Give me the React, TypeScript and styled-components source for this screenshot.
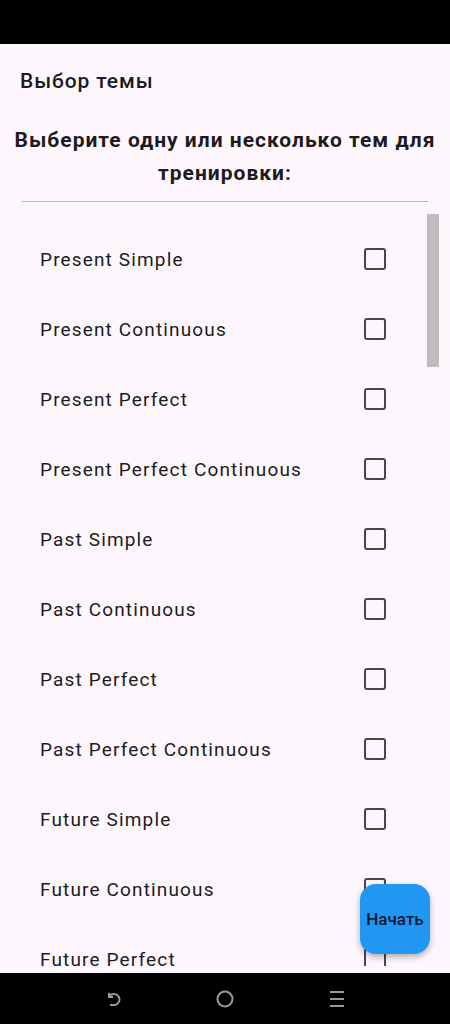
import React from "react";
import styled, { createGlobalStyle } from "styled-components";

const topics = [
  "Present Simple",
  "Present Continuous",
  "Present Perfect",
  "Present Perfect Continuous",
  "Past Simple",
  "Past Continuous",
  "Past Perfect",
  "Past Perfect Continuous",
  "Future Simple",
  "Future Continuous",
  "Future Perfect",
];

const GlobalStyle = createGlobalStyle`
  html, body {
    margin: 0;
    padding: 0;
    background: #000;
  }
  * {
    box-sizing: border-box;
  }
`;

export default function App() {
  return (
    <>
      <GlobalStyle />
      <Screen>
        <StatusBar />
        <Page>
          <AppBar>Выбор темы</AppBar>
          <Heading>Выберите одну или несколько тем для тренировки:</Heading>
          <Divider />
          <ListArea>
            <TopicList>
              {topics.map((t) => (
                <TopicRow key={t}>
                  <TopicLabel>{t}</TopicLabel>
                  <CheckBox />
                </TopicRow>
              ))}
            </TopicList>
            <ScrollThumb />
          </ListArea>
          <StartButton>Начать</StartButton>
        </Page>
        <NavBar>
          <NavIcon width="24" height="24" viewBox="0 0 24 24">
            <path d="M8 6 L8 10 L12 10" fill="none" stroke="#9a9a9a" strokeWidth="2" />
            <path d="M8 10 Q9 7 13 7 A5.5 5.5 0 0 1 13 18 L9 18" fill="none" stroke="#9a9a9a" strokeWidth="2" />
          </NavIcon>
          <NavIcon width="24" height="24" viewBox="0 0 24 24">
            <circle cx="12" cy="12" r="7.5" fill="none" stroke="#9a9a9a" strokeWidth="2" />
          </NavIcon>
          <NavIcon width="24" height="24" viewBox="0 0 24 24">
            <path d="M5 5 H19 M5 12 H19 M5 19 H19" stroke="#9a9a9a" strokeWidth="2" />
          </NavIcon>
        </NavBar>
      </Screen>
    </>
  );
}

const Screen = styled.div`
  width: 450px;
  height: 1024px;
  display: flex;
  flex-direction: column;
  background: #000;
  font-family: Roboto, "Noto Sans", sans-serif;
`;

const StatusBar = styled.div`
  height: 44px;
  flex: none;
  background: #000;
`;

const Page = styled.div`
  position: relative;
  flex: 1;
  display: flex;
  flex-direction: column;
  background: #fdf7fd;
  overflow: hidden;
`;

const AppBar = styled.div`
  height: 72px;
  padding: 25px 20px 0;
  font-size: 21px;
  font-weight: 500;
  letter-spacing: 0.9px;
  color: #1d1b20;
`;

const Heading = styled.div`
  padding: 8px 8px 0;
  text-align: center;
  font-size: 21px;
  font-weight: 700;
  letter-spacing: 1px;
  line-height: 33px;
  color: #1d1b20;
`;

const Divider = styled.div`
  margin: 11px 22px 0;
  height: 1px;
  background: #b9b3bd;
`;

const ListArea = styled.div`
  position: relative;
  flex: 1;
  overflow: hidden;
  padding-top: 22px;
  margin-bottom: 7px;
`;

const TopicList = styled.div`
  display: flex;
  flex-direction: column;
`;

const TopicRow = styled.div`
  height: 70px;
  flex: none;
  display: flex;
  align-items: center;
  justify-content: space-between;
  padding: 0 64px 0 40px;
`;

const TopicLabel = styled.span`
  font-size: 19px;
  letter-spacing: 1.15px;
  color: #1d1b20;
`;

const CheckBox = styled.div`
  width: 22px;
  height: 22px;
  border: 2px solid #49454f;
  border-radius: 3px;
`;

const ScrollThumb = styled.div`
  position: absolute;
  top: 12px;
  right: 11px;
  width: 12px;
  height: 153px;
  background: #bdbdbd;
`;

const StartButton = styled.button`
  position: absolute;
  right: 20px;
  bottom: 19px;
  width: 70px;
  height: 70px;
  border: none;
  border-radius: 16px;
  background: #2196f3;
  color: #0d1a33;
  font-family: Roboto, "Noto Sans", sans-serif;
  font-size: 17px;
  font-weight: 500;
  padding: 0;
  box-shadow: 0 3px 6px rgba(0, 0, 0, 0.3);
`;

const NavBar = styled.div`
  height: 51px;
  flex: none;
  background: #000;
  display: flex;
  align-items: center;
  justify-content: center;
  gap: 88px;
`;

const NavIcon = styled.svg`
  display: block;
`;
